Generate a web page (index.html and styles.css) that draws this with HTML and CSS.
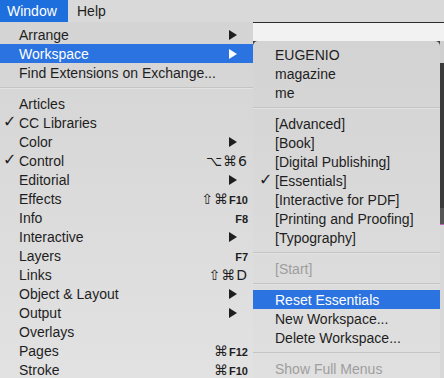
FILE: index.html
```html
<!DOCTYPE html>
<html lang="en">
<head>
    <meta charset="UTF-8">
    <title>Window menu</title>
    <link rel="stylesheet" href="styles.css">
</head>
<body>
    <div class="menubar">
        <div class="menubar-item active">Window</div>
        <div class="menubar-item">Help</div>
    </div>

    <div class="screen">
        <!-- Menu principal -->
        <div class="menu main-menu">
            <div class="item"><span class="label">Arrange</span><span class="arrow"></span></div>
            <div class="item selected"><span class="label">Workspace</span><span class="arrow"></span></div>
            <div class="item"><span class="label">Find Extensions on Exchange...</span></div>
            <div class="sep"></div>
            <div class="item"><span class="label">Articles</span></div>
            <div class="item"><span class="check">✓</span><span class="label">CC Libraries</span></div>
            <div class="item"><span class="label">Color</span><span class="arrow"></span></div>
            <div class="item"><span class="check">✓</span><span class="label">Control</span><span class="key">⌥⌘6</span></div>
            <div class="item"><span class="label">Editorial</span><span class="arrow"></span></div>
            <div class="item"><span class="label">Effects</span><span class="key">⇧⌘<small>F10</small></span></div>
            <div class="item"><span class="label">Info</span><span class="key"><small>F8</small></span></div>
            <div class="item"><span class="label">Interactive</span><span class="arrow"></span></div>
            <div class="item"><span class="label">Layers</span><span class="key"><small>F7</small></span></div>
            <div class="item"><span class="label">Links</span><span class="key">⇧⌘D</span></div>
            <div class="item"><span class="label">Object &amp; Layout</span><span class="arrow"></span></div>
            <div class="item"><span class="label">Output</span><span class="arrow"></span></div>
            <div class="item"><span class="label">Overlays</span></div>
            <div class="item"><span class="label">Pages</span><span class="key">⌘<small>F12</small></span></div>
            <div class="item"><span class="label">Stroke</span><span class="key">⌘<small>F10</small></span></div>
        </div>

        <div class="behind">
            <div class="window-top"></div>
            <div class="behind-row">
                <!-- Sous-menu Workspace -->
                <div class="menu sub-menu">
                    <div class="item"><span class="label">EUGENIO</span></div>
                    <div class="item"><span class="label">magazine</span></div>
                    <div class="item"><span class="label">me</span></div>
                    <div class="sep"></div>
                    <div class="item"><span class="label">[Advanced]</span></div>
                    <div class="item"><span class="label">[Book]</span></div>
                    <div class="item"><span class="label">[Digital Publishing]</span></div>
                    <div class="item"><span class="check">✓</span><span class="label">[Essentials]</span></div>
                    <div class="item"><span class="label">[Interactive for PDF]</span></div>
                    <div class="item"><span class="label">[Printing and Proofing]</span></div>
                    <div class="item"><span class="label">[Typography]</span></div>
                    <div class="sep"></div>
                    <div class="item disabled"><span class="label">[Start]</span></div>
                    <div class="sep"></div>
                    <div class="item selected"><span class="label">Reset Essentials</span></div>
                    <div class="item"><span class="label">New Workspace...</span></div>
                    <div class="item"><span class="label">Delete Workspace...</span></div>
                    <div class="sep"></div>
                    <div class="item disabled"><span class="label">Show Full Menus</span></div>
                </div>
                <div class="app-edge">
                    <div class="edge-light"></div>
                    <div class="edge-dark"></div>
                    <div class="edge-mid"></div>
                    <div class="edge-pink"></div>
                    <div class="edge-grey"></div>
                </div>
            </div>
        </div>
    </div>
</body>
</html>
```

FILE: styles.css
```css
body {
    margin: 0;
    width: 444px;
    height: 378px;
    overflow: hidden;
    font-family: 'Liberation Sans', Arial, sans-serif;
    font-size: 14px;
    color: #1e1e1e;
    background: #d6d6d6;
}

/* Barre de menu */
.menubar {
    display: flex;
    height: 22px;
    background: #d9d9d9;
}

.menubar-item {
    line-height: 22px;
    padding: 0 9px;
}

.menubar-item.active {
    box-sizing: border-box;
    width: 68px;
    padding-left: 7px;
    background: #1c6fdc;
    color: #fff;
}

.screen {
    display: flex;
    height: 356px;
}

/* Menus */
.menu {
    background: linear-gradient(#d4d4d4, #e2e2e2);
    padding-top: 3px;
}

.main-menu {
    width: 253px;
    flex: none;
}

.item {
    display: flex;
    align-items: center;
    height: 19px;
    padding: 0 5px 0 19px;
    position: relative;
}

.item.selected {
    background: #2a73e0;
    color: #fff;
}

.item.disabled {
    color: #9e9e9e;
}

.check {
    position: absolute;
    left: 3px;
    top: -1px;
    font-family: 'DejaVu Sans', sans-serif;
    font-size: 16px;
    line-height: 20px;
}

.label {
    flex: 1;
    white-space: nowrap;
}

.arrow {
    width: 0;
    height: 0;
    border-top: 5px solid transparent;
    border-bottom: 5px solid transparent;
    border-left: 8px solid #1e1e1e;
    margin-right: 11px;
}

.selected .arrow {
    border-left-color: #fff;
}

.key {
    font-family: 'DejaVu Sans', sans-serif;
    font-size: 14px;
    letter-spacing: 1px;
}

.key small {
    font-family: 'Liberation Sans', Arial, sans-serif;
    font-size: 11px;
    font-weight: bold;
    letter-spacing: 0;
}

.sep {
    height: 1px;
    margin: 5px 0;
    background: #c4c4c4;
    border-bottom: 1px solid #e2e2e2;
}

/* Fenêtre derrière */
.behind {
    flex: 1;
    display: flex;
    flex-direction: column;
    background: #3c3c3c;
}

.window-top {
    height: 18px;
    background: #f2f2f2;
    border-top: 1px solid #2e2e2e;
    flex: none;
}

.behind-row {
    flex: 1;
    display: flex;
}

.sub-menu {
    width: 187px;
    border-radius: 5px 5px 0 0;
    padding-top: 4px;
    background: linear-gradient(#d3d3d3, #e0e0e0);
}

.sub-menu .item {
    padding-left: 22px;
}

.sub-menu .check {
    left: 6px;
}

.app-edge {
    flex: 1;
    display: flex;
    flex-direction: column;
}

.edge-light {
    height: 22px;
    background: #cfcfcf;
}

.edge-dark {
    height: 145px;
    background: #3a3a3a;
}

.edge-mid {
    height: 16px;
    background: #555;
}

.edge-pink {
    height: 1px;
    background: #c45fc0;
}

.edge-grey {
    flex: 1;
    background: #d8d8d8;
}
```
